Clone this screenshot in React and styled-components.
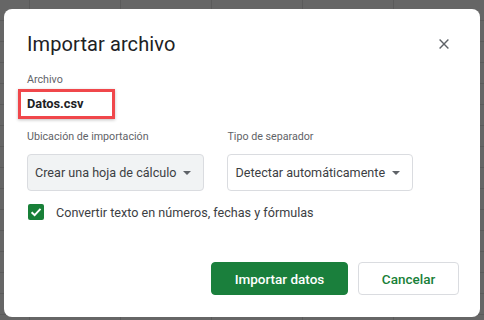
import React from "react";
import styled, { createGlobalStyle } from "styled-components";

const GlobalStyle = createGlobalStyle`
  html, body {
    margin: 0;
    padding: 0;
  }
  body {
    width: 484px;
    height: 320px;
    overflow: hidden;
    font-family: Roboto, "Liberation Sans", Arial, sans-serif;
    background-color: #666666;
    background-image:
      repeating-linear-gradient(to right, transparent 0 29px, #5b5b5b 29px 30px, transparent 30px 91px),
      repeating-linear-gradient(to bottom, transparent 0 20px, #5b5b5b 20px 21px);
  }
`;

const App = () => {
  return (
    <>
      <GlobalStyle />
      <Page>
        <Dialog>
          <Header>
            <Title>Importar archivo</Title>
            <CloseButton aria-label="Cerrar">
              <svg width="10" height="10" viewBox="0 0 10 10">
                <path d="M0.6 0.6 L9.4 9.4 M9.4 0.6 L0.6 9.4" stroke="#5f6368" strokeWidth="1.4" fill="none" />
              </svg>
            </CloseButton>
          </Header>

          <FieldLabel>Archivo</FieldLabel>
          <FileName>Datos.csv</FileName>

          <Options>
            <Field>
              <SectionLabel>Ubicación de importación</SectionLabel>
              <Select filled>
                Crear una hoja de cálculo
                <Caret />
              </Select>
            </Field>
            <Field>
              <SectionLabel>Tipo de separador</SectionLabel>
              <Select>
                Detectar automáticamente
                <Caret />
              </Select>
            </Field>
          </Options>

          <CheckRow>
            <Checkbox>
              <svg width="12" height="12" viewBox="0 0 12 12">
                <path d="M1.6 6.2 L4.6 9.1 L10.5 2.9" stroke="#fff" strokeWidth="2" fill="none" />
              </svg>
            </Checkbox>
            Convertir texto en números, fechas y fórmulas
          </CheckRow>

          <Footer>
            <Button primary>Importar datos</Button>
            <Button>Cancelar</Button>
          </Footer>
        </Dialog>
      </Page>
    </>
  );
};

// STYLED COMPONENTS

const Page = styled.div`
  padding: 9px 4px 3px 4px;
`;

const Dialog = styled.div`
  width: 476px;
  height: 308px;
  box-sizing: border-box;
  background: #ffffff;
  border-radius: 8px;
  padding: 21px 21px 22px 23px;
  display: flex;
  flex-direction: column;
`;

const Header = styled.div`
  display: flex;
  align-items: center;
  justify-content: space-between;
  height: 28px;
`;

const Title = styled.h1`
  margin: 0;
  font-size: 20px;
  font-weight: 400;
  line-height: 28px;
  color: #202124;
  letter-spacing: 0.1px;
`;

const CloseButton = styled.div`
  width: 10px;
  height: 10px;
  display: flex;
  margin-right: 10px;
`;

const FieldLabel = styled.div`
  margin-top: 14px;
  font-size: 10.7px;
  line-height: 16px;
  color: #5f6368;
`;

const FileName = styled.div`
  margin: 1px 0 0 -9px;
  width: 97px;
  height: 30px;
  box-sizing: border-box;
  border: 3px solid #f0474b;
  box-shadow: 0 1px 3px rgba(0, 0, 0, 0.25);
  padding-left: 6px;
  font-size: 12.8px;
  font-weight: 700;
  line-height: 24px;
  color: #202124;
`;

const Options = styled.div`
  display: flex;
  gap: 23px;
  margin-top: 10px;
`;

const Field = styled.div`
  display: flex;
  flex-direction: column;
  gap: 9px;
`;

const SectionLabel = styled.div`
  font-size: 10.7px;
  line-height: 16px;
  color: #5f6368;
`;

const Select = styled.div`
  height: 37px;
  box-sizing: border-box;
  display: flex;
  align-items: center;
  gap: 7px;
  padding: 0 12px 0 7px;
  border: 1px solid #dadce0;
  border-radius: 4px;
  background: ${(p) => (p.filled ? "#f1f3f4" : "#ffffff")};
  font-size: 12.6px;
  color: #3c4043;
`;

const Caret = styled.span`
  width: 0;
  height: 0;
  border-left: 4px solid transparent;
  border-right: 4px solid transparent;
  border-top: 4px solid #5f6368;
`;

const CheckRow = styled.div`
  display: flex;
  align-items: center;
  gap: 12px;
  margin-top: 11px;
  padding-left: 1px;
  height: 20px;
  font-size: 12.6px;
  color: #3c4043;
`;

const Checkbox = styled.span`
  width: 16px;
  height: 16px;
  border-radius: 2px;
  background: #188038;
  display: flex;
  align-items: center;
  justify-content: center;
`;

const Footer = styled.div`
  margin-top: auto;
  display: flex;
  justify-content: flex-end;
  gap: 10px;
`;

const Button = styled.div`
  height: 33px;
  box-sizing: border-box;
  display: flex;
  align-items: center;
  justify-content: center;
  width: ${(p) => (p.primary ? "137px" : "101px")};
  border-radius: 4px;
  font-size: 13.5px;
  font-weight: 500;
  background: ${(p) => (p.primary ? "#1a7f3c" : "#ffffff")};
  color: ${(p) => (p.primary ? "#ffffff" : "#188038")};
  border: 1px solid ${(p) => (p.primary ? "#1a7f3c" : "#dadce0")};
`;

export default App;
